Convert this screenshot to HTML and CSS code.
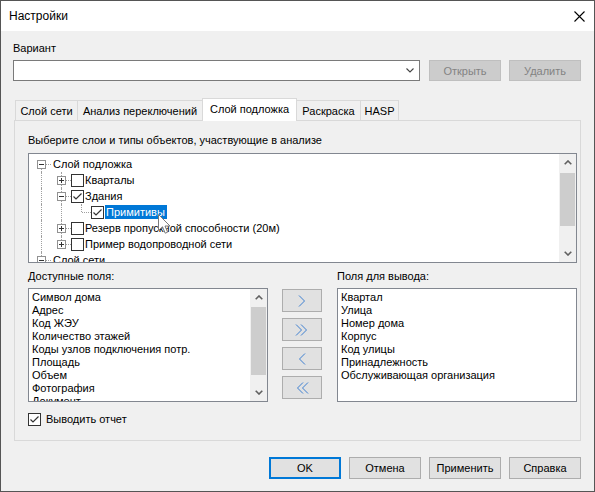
FILE: index.html
```html
<!DOCTYPE html>
<html lang="ru">
<head>
<meta charset="utf-8">
<title>Настройки</title>
<link rel="stylesheet" href="styles.css">
</head>
<body>
<div class="window">
  <div class="titlebar">
    <span class="title">Настройки</span>
    <svg class="close" width="11" height="11" viewBox="0 0 11 11"><path d="M0.5 0.5 L10.5 10.5 M10.5 0.5 L0.5 10.5" stroke="#000" stroke-width="1.1" fill="none"/></svg>
  </div>
  <div class="content">
    <div class="label">Вариант</div>
    <div class="variant-row">
      <div class="combo">
        <svg class="combo-arrow" width="8" height="5" viewBox="0 0 8 5"><polyline points="0.5,0.5 4,4 7.5,0.5" fill="none" stroke="#444" stroke-width="1.1"/></svg>
      </div>
      <div class="btn disabled">Открыть</div>
      <div class="btn disabled">Удалить</div>
    </div>
    <div class="tabs">
      <div class="tab w1">Слой сети</div>
      <div class="tab w2">Анализ переключений</div>
      <div class="tab w3 active">Слой подложка</div>
      <div class="tab w4">Раскраска</div>
      <div class="tab w5">HASP</div>
    </div>
    <div class="panel">
      <div class="hint">Выберите слои и типы объектов, участвующие в анализе</div>
      <div class="tree">
        <div class="tree-rows">
          <div class="trow"><span class="cell r"><span class="exp minus"></span></span><span class="ttext root">Слой подложка</span></div>
          <div class="trow"><span class="cell v"></span><span class="cell t"><span class="exp plus"></span></span><span class="tcb"></span><span class="ttext">Кварталы</span></div>
          <div class="trow"><span class="cell v"></span><span class="cell t"><span class="exp minus"></span></span><span class="tcb"><svg width="11" height="11" viewBox="0 0 11 11"><polyline points="1.5,5.5 4,8 9.5,2.5" fill="none" stroke="#333" stroke-width="1.2"/></svg></span><span class="ttext">Здания</span></div>
          <div class="trow"><span class="cell v"></span><span class="cell v"></span><span class="cell l"></span><span class="tcb"><svg width="11" height="11" viewBox="0 0 11 11"><polyline points="1.5,5.5 4,8 9.5,2.5" fill="none" stroke="#333" stroke-width="1.2"/></svg></span><span class="ttext sel">Примитивы</span></div>
          <div class="trow"><span class="cell v"></span><span class="cell t"><span class="exp plus"></span></span><span class="tcb"></span><span class="ttext">Резерв пропускной способности (20м)</span></div>
          <div class="trow"><span class="cell v"></span><span class="cell l"><span class="exp plus"></span></span><span class="tcb"></span><span class="ttext">Пример водопроводной сети</span></div>
          <div class="trow"><span class="cell t"><span class="exp minus"></span></span><span class="ttext root">Слой сети</span></div>
        </div>
        <div class="vscroll">
          <div class="sb-btn"><svg width="8" height="5" viewBox="0 0 8 5"><polyline points="0.7,4.3 4,1 7.3,4.3" fill="none" stroke="#606060" stroke-width="1.6"/></svg></div>
          <div class="thumb tree-thumb"></div>
          <div class="sb-fill"></div>
          <div class="sb-btn"><svg width="8" height="5" viewBox="0 0 8 5"><polyline points="0.7,0.7 4,4 7.3,0.7" fill="none" stroke="#606060" stroke-width="1.6"/></svg></div>
        </div>
        <svg class="cursor" width="13" height="21" viewBox="0 0 13 21"><path d="M0.5 0.5 L0.5 16.5 L4.5 12.8 L7.2 19.2 L9.6 18.2 L7 12 L12 12 Z" fill="#fff" stroke="#7a7a7a" stroke-width="1"/></svg>
      </div>
      <div class="fields">
        <div class="col">
          <div class="label">Доступные поля:</div>
          <div class="listbox">
            <div class="items">
              <div class="item">Символ дома</div>
              <div class="item">Адрес</div>
              <div class="item">Код ЖЭУ</div>
              <div class="item">Количество этажей</div>
              <div class="item">Коды узлов подключения потр.</div>
              <div class="item">Площадь</div>
              <div class="item">Объем</div>
              <div class="item">Фотография</div>
              <div class="item">Документ</div>
            </div>
            <div class="vscroll">
              <div class="sb-btn"><svg width="8" height="5" viewBox="0 0 8 5"><polyline points="0.7,4.3 4,1 7.3,4.3" fill="none" stroke="#606060" stroke-width="1.6"/></svg></div>
              <div class="thumb list-thumb"></div>
              <div class="sb-fill"></div>
              <div class="sb-btn"><svg width="8" height="5" viewBox="0 0 8 5"><polyline points="0.7,0.7 4,4 7.3,0.7" fill="none" stroke="#606060" stroke-width="1.6"/></svg></div>
            </div>
          </div>
        </div>
        <div class="arrows">
          <div class="abtn"><svg width="8" height="12" viewBox="0 0 8 12"><polyline points="1,0.5 6.5,6 1,11.5" fill="none" stroke="#3c7fd0" stroke-width="1"/></svg></div>
          <div class="abtn"><svg width="14" height="12" viewBox="0 0 14 12"><polyline points="1,0.5 6.5,6 1,11.5" fill="none" stroke="#3c7fd0" stroke-width="1"/><polyline points="6,0.5 11.5,6 6,11.5" fill="none" stroke="#3c7fd0" stroke-width="1"/></svg></div>
          <div class="abtn"><svg width="8" height="12" viewBox="0 0 8 12"><polyline points="7,0.5 1.5,6 7,11.5" fill="none" stroke="#3c7fd0" stroke-width="1"/></svg></div>
          <div class="abtn"><svg width="14" height="12" viewBox="0 0 14 12"><polyline points="8,0.5 2.5,6 8,11.5" fill="none" stroke="#3c7fd0" stroke-width="1"/><polyline points="13,0.5 7.5,6 13,11.5" fill="none" stroke="#3c7fd0" stroke-width="1"/></svg></div>
        </div>
        <div class="col">
          <div class="label">Поля для вывода:</div>
          <div class="listbox">
            <div class="items">
              <div class="item">Квартал</div>
              <div class="item">Улица</div>
              <div class="item">Номер дома</div>
              <div class="item">Корпус</div>
              <div class="item">Код улицы</div>
              <div class="item">Принадлежность</div>
              <div class="item">Обслуживающая организация</div>
            </div>
          </div>
        </div>
      </div>
      <div class="check-row">
        <span class="cb"><svg width="11" height="11" viewBox="0 0 11 11"><polyline points="1.5,5.5 4,8 9.5,2.5" fill="none" stroke="#333" stroke-width="1.2"/></svg></span>
        <span class="cb-text">Выводить отчет</span>
      </div>
    </div>
    <div class="footer">
      <div class="btn default">OK</div>
      <div class="btn">Отмена</div>
      <div class="btn">Применить</div>
      <div class="btn">Справка</div>
    </div>
  </div>
</div>
</body>
</html>
```
FILE: styles.css
```css
* { box-sizing: border-box; }
html, body { margin: 0; padding: 0; }
body {
  width: 595px;
  height: 492px;
  overflow: hidden;
  background: #fff;
  font-family: "Liberation Sans", Arial, sans-serif;
  font-size: 11px;
  color: #000;
}
.window {
  width: 595px;
  height: 492px;
  border: 1px solid #555;
  display: flex;
  flex-direction: column;
  background: #f0f0f0;
}
.titlebar {
  flex: none;
  height: 30px;
  background: #fff;
  display: flex;
  align-items: center;
  justify-content: space-between;
  padding: 0 9px 0 8px;
}
.title { font-size: 12px; }
.content {
  flex: 1;
  display: flex;
  flex-direction: column;
  padding: 9px 13px 12px 12px;
}
.label { height: 16px; line-height: 16px; white-space: nowrap; }
.variant-row {
  display: flex;
  margin-top: 4px;
  height: 21px;
  gap: 8px;
}
.combo {
  width: 407px;
  margin-right: 1px;
  height: 21px;
  background: #fff;
  border: 1px solid #7a7a7a;
  display: flex;
  align-items: center;
  justify-content: flex-end;
  padding-right: 5px;
}
.btn {
  width: 72px;
  height: 22px;
  display: flex;
  align-items: center;
  justify-content: center;
  background: #e1e1e1;
  border: 1px solid #adadad;
  white-space: nowrap;
}
.variant-row .btn { height: 21px; }
.btn.disabled { background: #cccccc; border-color: #bfbfbf; color: #838383; }
.btn.default { border: 2px solid #0078d7; }
.tabs {
  display: flex;
  align-items: flex-end;
  height: 22px;
  margin-top: 17px;
  padding-left: 2px;
}
.tab {
  height: 20px;
  border: 1px solid #d9d9d9;
  border-bottom: none;
  background: #f0f0f0;
  display: flex;
  align-items: center;
  justify-content: center;
  white-space: nowrap;
  margin-left: -1px;
}
.tab.w1 { width: 63px; margin-left: 0; }
.tab.w2 { width: 126px; }
.tab.w3 { width: 95px; }
.tab.w4 { width: 65px; }
.tab.w5 { width: 39px; }
.tab.active {
  height: 23px;
  margin-bottom: -1px;
  background: #fff;
  position: relative;
  z-index: 1;
  padding-bottom: 2px;
}
.panel {
  flex: 1;
  border: 1px solid #d9d9d9;
  margin-left: 1px;
  background: #f0f0f0;
  padding: 11px 3px 0 13px;
  display: flex;
  flex-direction: column;
}
.hint { height: 16px; line-height: 16px; white-space: nowrap; }
.tree {
  margin-top: 5px;
  height: 110px;
  border: 1px solid #828790;
  background: #fff;
  display: flex;
  position: relative;
}
.tree-rows {
  flex: 1;
  padding: 2px 0 0 2px;
  overflow: hidden;
}
.trow {
  display: flex;
  align-items: center;
  height: 16px;
  white-space: nowrap;
}
.cell {
  flex: none;
  width: 20px;
  height: 16px;
  position: relative;
  display: flex;
  align-items: center;
}
.cell.v::before, .cell.t::before, .cell.l::before, .cell.r::before {
  content: "";
  position: absolute;
  left: 10px;
  border-left: 1px dotted #a0a0a0;
}
.cell.v::before, .cell.t::before { top: 0; bottom: 0; }
.cell.l::before { top: 0; height: 8px; }
.cell.r::before { top: 8px; bottom: 0; }
.cell.t::after, .cell.l::after, .cell.r::after {
  content: "";
  position: absolute;
  left: 11px;
  right: 0;
  top: 8px;
  border-top: 1px dotted #a0a0a0;
}
.exp {
  width: 9px;
  height: 9px;
  margin-left: 6px;
  margin-top: 1px;
  border: 1px solid #919191;
  background: #fff;
  position: relative;
  z-index: 1;
}
.exp::before {
  content: "";
  position: absolute;
  left: 1px;
  right: 1px;
  top: 3px;
  height: 1px;
  background: #333;
}
.exp.plus::after {
  content: "";
  position: absolute;
  top: 1px;
  bottom: 1px;
  left: 3px;
  width: 1px;
  background: #333;
}
.tcb, .cb {
  flex: none;
  width: 13px;
  height: 13px;
  border: 1px solid #333;
  background: #fff;
  display: flex;
  align-items: center;
  justify-content: center;
}
.ttext { margin-left: 1px; line-height: 14px; }
.ttext.root { margin-left: 2px; }
.ttext.sel {
  background: #0078d7;
  color: #fff;
  padding: 0 2px 0 1px;
  height: 14px;
}
.vscroll {
  flex: none;
  width: 17px;
  background: #f0f0f0;
  display: flex;
  flex-direction: column;
}
.sb-btn {
  height: 17px;
  flex: none;
  display: flex;
  align-items: center;
  justify-content: center;
}
.thumb { margin: 0 1px; background: #cdcdcd; flex: none; }
.tree-thumb { margin-top: 2px; height: 53px; }
.list-thumb { margin-top: 1px; height: 68px; }
.sb-fill { flex: 1; }
.cursor { position: absolute; left: 129px; top: 60px; }
.fields {
  display: flex;
  margin-top: 5px;
}
.col { width: 240px; display: flex; flex-direction: column; }
.listbox {
  margin-top: 4px;
  height: 114px;
  border: 1px solid #828790;
  background: #fff;
  display: flex;
}
.items {
  flex: 1;
  overflow: hidden;
  padding: 2px 0 0 3px;
}
.item { height: 13px; line-height: 13px; white-space: nowrap; }
.arrows {
  width: 40px;
  margin: 21px 15px 0 14px;
  display: flex;
  flex-direction: column;
  gap: 6px;
}
.abtn {
  height: 23px;
  background: #e1e1e1;
  border: 1px solid #adadad;
  display: flex;
  align-items: center;
  justify-content: center;
}
.check-row {
  margin-top: 10px;
  display: flex;
  align-items: center;
  height: 14px;
}
.cb-text { margin-left: 5px; }
.footer {
  flex: none;
  margin-top: 16px;
  display: flex;
  justify-content: flex-end;
  gap: 8px;
}
```
